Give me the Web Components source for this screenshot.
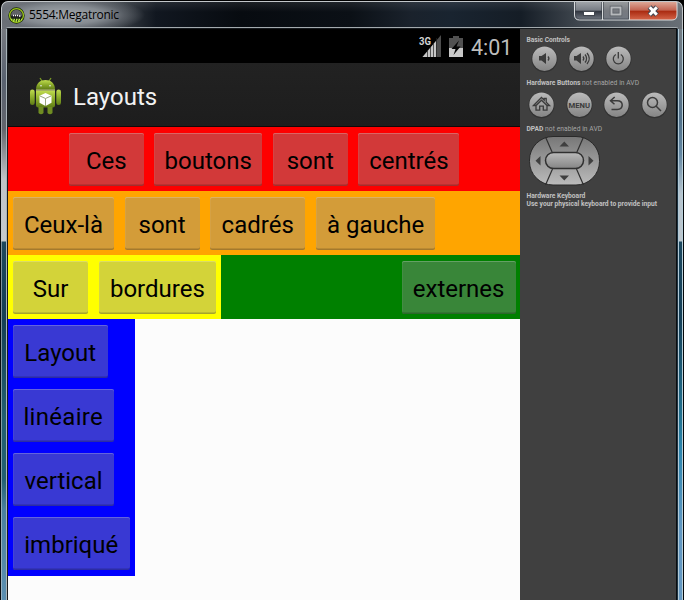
<!DOCTYPE html>
<html lang="fr">
<head>
<meta charset="utf-8">
<title>5554:Megatronic</title>
<style>
html,body{margin:0;width:684px;height:600px;overflow:hidden;background:#000}
</style>
</head>
<body>
<emulator-window>
  <title-bar slot="title">5554:Megatronic</title-bar>
  <phone-screen slot="screen">
    <status-bar></status-bar>
    <action-bar>Layouts</action-bar>
    <linear-row style="--bg:#fe0000;justify-content:center;padding-right:4.500px">
      <android-button style="width:74.500px">Ces</android-button>
      <android-button style="width:108px">boutons</android-button>
      <android-button style="width:75px">sont</android-button>
      <android-button style="width:101px">centrés</android-button>
    </linear-row>
    <linear-row style="--bg:#ffa500">
      <android-button style="width:101px">Ceux-là</android-button>
      <android-button style="width:75px">sont</android-button>
      <android-button style="width:95px">cadrés</android-button>
      <android-button style="width:119.500px">à gauche</android-button>
    </linear-row>
    <split-row>
      <linear-row slot="start" style="--bg:#ffff00">
        <android-button style="width:75px">Sur</android-button>
        <android-button style="width:117.500px">bordures</android-button>
      </linear-row>
      <android-button slot="end" style="width:114px">externes</android-button>
    </split-row>
    <linear-column>
      <android-button style="width:94.500px">Layout</android-button>
      <android-button style="width:100.500px;letter-spacing:.3px">linéaire</android-button>
      <android-button style="width:101px">vertical</android-button>
      <android-button style="width:116.500px">imbriqué</android-button>
    </linear-column>
  </phone-screen>
  <control-panel slot="controls"></control-panel>
</emulator-window>

<script>
const define = (name, html) => {
  const tpl = document.createElement('template');
  tpl.innerHTML = html;
  customElements.define(name, class extends HTMLElement {
    constructor() {
      super();
      this.attachShadow({mode: 'open'}).append(tpl.content.cloneNode(true));
    }
  });
};

define('emulator-window', `
<style>
:host{display:grid;width:684px;height:600px;box-sizing:border-box;
  grid-template:29px 571px / 8px 512px 156px 8px;overflow:hidden;
  font-family:Roboto,sans-serif;background:#000}
.title{grid-column:1/-1}
.left,.right{box-sizing:border-box}
.left{border-left:1px solid #090c0f;border-right:1px solid #15191c;
  background:linear-gradient(90deg,#0c1014 0 .5px,#c3c8cb99 .5px 1.500px,transparent 1.500px 5px,#a9b4b9 5px 6px),
  linear-gradient(#777a80 0,#596270 50px,#62656c 100px,#bfc3c7 150px,#c6cacd 212px,#1e475c 213px,#153f54 290px,#236071 390px,#236071 450px,#4a809d 480px,#5c8fb1 571px)}
.right{border-left:1px solid #0b0e10;border-right:1px solid #05080a;
  background:linear-gradient(90deg,#1d3342 0 1px,#b2cad7 1px 2px,transparent 2px 5px,#b9d0da 5px 6px),
  linear-gradient(#747d84 0,#52718a 90px,#6387a2 125px,#b6c4ce 165px,#bcc6cd 212px,#1c485f 213px,#164058 290px,#237391 390px,#2c85ad 420px,#6298c2 500px,#6598c1 571px)}
</style>
<div class="title"><slot name="title"></slot></div>
<div class="left"></div>
<slot name="screen"></slot>
<slot name="controls"></slot>
<div class="right"></div>`);

define('title-bar', `
<style>
:host{display:flex;height:29px;box-sizing:border-box;border:1px solid #000;border-bottom:0;
  border-radius:8px 8px 0 0;overflow:hidden;position:relative;
  background:radial-gradient(ellipse 82px 19px at 62px 14px,#a5a9ae 0,#858b91 50%,#686d74aa 75%,transparent 100%),
    linear-gradient(#ffffff18,transparent 40%),
    linear-gradient(90deg,#6d7178 0,#626970 70px,#30363d 125px,#111720 155px,#070b10 240px,#0b1016 350px,#1a222c 410px,#192430 450px,#151d26 520px,#414850 580px,#6a7178 684px)}
:host::before{content:"";position:absolute;inset:0;border:1px solid #c2c6c9;border-bottom:0;border-radius:7px 7px 0 0}
:host::after{content:"";position:absolute;left:5px;right:5px;bottom:0;height:2px;box-sizing:border-box;border:1px solid #a3aaae;border-bottom-color:#15191d;border-radius:2px 2px 0 0}
.logo{margin:6px 0 0 7px;width:17px;height:17px;flex:none}
.name{margin:6px 0 0 4px;font:12px/16px "Open Sans",sans-serif;letter-spacing:-.27px;color:#000;white-space:nowrap}
.buttons{margin:1px 5px 0 auto;height:19px;width:104px;flex:none}
</style>
<svg class="logo" viewBox="0 0 17 17"><circle cx="8.500" cy="8.500" r="7.400" fill="#1c2519" stroke="#172708" stroke-width="1.600"/><circle cx="8.500" cy="8.500" r="6.900" fill="none" stroke="#9cc51d" stroke-width="1.300"/><path d="M3 8a5.500 5.300 0 0 1 11 0v1H3z" fill="#606366"/><path d="M3.500 8.500h10v2h-10z" fill="#222"/><path d="M5 8.500h1M7 8.500h1M9 8.500h1M11 9h1.500" stroke="#fff" stroke-width="1.300"/><path d="M3 12.500h11M5 14h7" stroke="#baf044" stroke-width="1.500" stroke-dasharray="1.500 1"/></svg>
<span class="name"><slot></slot></span>
<svg class="buttons" viewBox="0 0 104 19">
 <defs>
  <linearGradient id="g" x2="0" y2="1"><stop stop-color="#a0a4a9"/><stop offset=".46" stop-color="#777c84"/><stop offset=".5" stop-color="#30353f"/><stop offset="1" stop-color="#737983"/></linearGradient>
  <linearGradient id="h" x2="0" y2="1"><stop stop-color="#979a9d"/><stop offset=".5" stop-color="#777a80"/><stop offset="1" stop-color="#737983"/></linearGradient>
  <linearGradient id="r" x2="0" y2="1"><stop stop-color="#dda797"/><stop offset=".46" stop-color="#c36350"/><stop offset=".5" stop-color="#a92910"/><stop offset="1" stop-color="#d5664a"/></linearGradient>
 </defs>
 <path d="M.5 0V13q0 5 5 5H28V0z" fill="url(#g)"/><path d="M28 0h28v18H28z" fill="url(#h)"/>
 <path d="M56 0h47v13q0 5-5 5H56z" fill="url(#r)"/>
 <path d="M.5 0V13q0 5 5 5H98q5 0 5-5V0M28.500 0v18M55.500 0v18" fill="none" stroke="#d8dbdd"/>
 <path d="M1.500 0v13q0 4 4 4H27.500V0M29.500 0v17h25V0" fill="none" stroke="#343a43" stroke-opacity=".55"/>
 <rect x="9.500" y="9.500" width="11" height="4" fill="#fff" stroke="#41464f"/>
 <path d="M37.500 5.500h9v7h-9z" fill="none" stroke="#565b62" stroke-width="3.400"/><path d="M37.500 5.500h9v7h-9z" fill="none" stroke="#b6b9bc" stroke-width="2"/>
 <path d="M75.500 5l7.500 8M83 5L75.500 13" stroke="#454852" stroke-width="5.200"/><path d="M75.700 5.200l7.100 7.600M82.800 5.200l-7.100 7.600" stroke="#fff" stroke-width="3"/>
</svg>`);

define('phone-screen', `
<style>:host{display:flex;flex-direction:column;align-items:stretch;width:512px;height:571px;background:#fcfcfc;overflow:hidden}</style>
<slot></slot>`);

define('status-bar', `
<style>
:host{display:flex;height:34px;flex:none;background:#000;justify-content:flex-end;align-items:center;
 color:#bdbdbd;padding-right:9px;box-sizing:border-box}
svg{flex:none;overflow:visible}
.net{font:700 11.500px Roboto,sans-serif}
.time{font:21.500px/34px Roboto,sans-serif;margin-left:8px;width:40px;padding-top:3px;white-space:nowrap}
</style>
<svg width="44" height="34"><path d="M22 6v22H3.500z" fill="#4d4d4d"/><path d="M17 12v16H3.500z" fill="#c6c6c6"/><path d="M8.500 21v7M11.500 18v10M14.500 15v13M17.500 9v19" stroke="#222" stroke-width=".7"/><path d="M0 7h13v10H0z" fill="#000"/><text class="net" x="0" y="16" fill="#d2d2d2" textLength="12" lengthAdjust="spacingAndGlyphs">3G</text>
<path d="M30 9h4V7h6v2h4v19H30z" fill="#515151"/><path d="M30 19h14v9H30z" fill="#c8c8c8"/><path d="M40 11.500l-7.500 8.500h4l-2 6 7-8.500h-4z" fill="#050505"/></svg>
<span class="time">4:01</span>`);

define('action-bar', `
<style>
:host{display:flex;height:64px;flex:none;background:linear-gradient(#222,#1d1d1d);border-bottom:1px solid #120808;box-sizing:border-box;align-items:center;color:#f2f2f2;font-size:24px}
svg{margin:2px 0 0 21px;flex:none}
span{margin:4px 0 0 11px;line-height:28px;white-space:nowrap}
</style>
<svg width="33" height="38" viewBox="0 0 33 38"><defs><linearGradient id="a" x2="0" y2="1"><stop stop-color="#c0dc50"/><stop offset=".5" stop-color="#8dad2b"/><stop offset="1" stop-color="#5f7c16"/></linearGradient></defs>
<path d="M11 1l2.500 4M22 1l-2.500 4" stroke="#799b25" stroke-width="1.300"/><path d="M7 12.500C7 6 11.500 3 16.500 3S26 6 26 12.500z" fill="url(#a)"/><path d="M7 13.500h19V28q0 2.500-2.500 2.500h-14Q7 30.500 7 28z" fill="url(#a)"/>
<rect x="1" y="12.500" width="4.700" height="15.500" rx="2.300" fill="url(#a)"/><rect x="27.300" y="12.500" width="4.700" height="15.500" rx="2.300" fill="url(#a)"/><path d="M9.500 30h5v6q-2.500 2.500-5 0zM18.500 30h5v6q-2.500 2.500-5 0z" fill="#708d22"/><path d="M7 13h19" stroke="#d8e687" stroke-width="1"/><circle cx="12" cy="8.800" r=".8" fill="#eef"/><circle cx="21" cy="8.800" r=".8" fill="#eef"/>
<path d="M16.500 16l6 2.700v7l-6 3.300-6-3.300v-7z" fill="#fff"/><path d="M11 19l5.500 2.500L22 19M16.500 21.500V29" stroke="#99a47b" fill="none"/></svg>
<span><slot></slot></span>`);

define('linear-row', `
<style>:host{display:flex;height:64px;flex:none;box-sizing:border-box;background:var(--bg);gap:10.600px;padding:6px 5px 0;align-items:flex-start}</style>
<slot></slot>`);

define('split-row', `
<style>:host{display:flex;height:64px;flex:none;background:#008000;justify-content:space-between}
::slotted(android-button){margin:6px 4.400px 0 0}</style>
<slot name="start"></slot><slot name="end"></slot>`);

define('linear-column', `
<style>:host{display:flex;flex-direction:column;align-items:flex-start;align-self:flex-start;width:127px;height:257px;flex:none;box-sizing:border-box;background:#00f;padding:6px 5px 0;gap:11px}</style>
<slot></slot>`);

define('android-button', `
<style>
:host{display:flex;height:53px;flex:none;box-sizing:border-box;justify-content:center;align-items:center;padding-top:2px;
 color:#000;font:24px/28px Roboto,sans-serif;white-space:nowrap;border-radius:2px;
 background:rgba(144,144,144,.396);
 box-shadow:inset 0 1px rgba(255,255,255,.22),inset 0 -1.500px rgba(0,0,0,.22),inset 1px 0 rgba(255,255,255,.06)}
</style><slot></slot>`);

define('control-panel', `
<style>
:host{display:flex;flex-direction:column;align-items:flex-start;box-sizing:border-box;width:156px;height:571px;background:#404040;padding:7px 0 0 6.500px;color:#a6a6a6;font:6.700px/8px Roboto,sans-serif;white-space:nowrap}
b{color:#c0c0c0;font-weight:700;letter-spacing:-.01px}
.line{height:8px;flex:none;letter-spacing:.04px}
.set{display:flex;gap:10.300px;margin:1px 0 7px 4px;height:27px;flex:none}
.hard{margin:4px 0 7px 1.500px;gap:10.500px}
svg{display:block;overflow:visible}
.pad{margin:0 0 5px 1px;flex:none}
</style>
<div class="line"><b>Basic Controls</b></div>
<div class="set"><round-button icon="low"></round-button><round-button icon="high"></round-button><round-button icon="power"></round-button></div>
<div class="line"><b>Hardware Buttons</b> not enabled in AVD</div>
<div class="set hard"><round-button icon="home"></round-button><round-button icon="menu"></round-button><round-button icon="back"></round-button><round-button icon="search"></round-button></div>
<div class="line"><b>DPAD</b> not enabled in AVD</div>
<svg class="pad" width="73" height="54" viewBox="0 -1 73 54"><defs><linearGradient id="p" x2="0" y2="1"><stop stop-color="#777"/><stop offset="1" stop-color="#bbb"/></linearGradient><linearGradient id="c" x2="0" y2="1"><stop stop-color="#bbb"/><stop offset="1" stop-color="#858585"/></linearGradient></defs>
<rect x="1.500" y="2.500" width="70" height="48.500" rx="23.500" fill="url(#p)" stroke="#292929"/>
<path d="M17.500 3l7 16M55.500 3l-7 16M17.500 51l7-16M55.500 51l-7-16" stroke="#303030" stroke-width="1.200"/>
<rect x="17.500" y="18.500" width="38" height="16" rx="8" fill="url(#c)" stroke="#303030" stroke-width="1.500"/>
<path d="M31.500 12.500h9.500l-4.700-5zM31.500 41.500h9.500l-4.700 5zM12.500 22v9.500l-5-4.700zM60.500 22v9.500l5-4.700z" fill="#3f3f3f"/></svg>
<div class="line"><b>Hardware Keyboard</b></div>
<div class="line"><b>Use your physical keyboard to provide input</b></div>`);

const icons = {
  low: '<path d="M8 11h2.500L15 8v11l-4.500-3.500H8z" fill="#3b3b3b"/><path d="M17 11.500q1.800 2 0 4" class="s"/>',
  high: '<path d="M6 11h2.500L13 8v11l-4.500-3.500H6z" fill="#3b3b3b"/><path d="M15 11.500q1.600 2 0 4M17 9.500q3.200 4 0 8M19 8q4.600 5.500 0 11" class="s"/>',
  power: '<path d="M10.800 9.500a5 5 0 1 0 5 0M13.300 7v6.500" class="s"/>',
  home: '<path d="M8 14.800v4.400h3.700v-4h3.600v4H19v-4.400M5.500 14.500l8-8 2.700 2.600V7.500h2v3.700l3.300 3.300H19l-5.500-5.300-5.500 5.300z" class="s"/>',
  menu: '<text x="2.500" y="16.700" textLength="21.500" lengthAdjust="spacingAndGlyphs" font-size="8" font-weight="700" fill="#3b3b3b">MENU</text>',
  back: '<path d="M11.700 6L7.500 9.700l4 3.600M8 9.700h6.200q5 0 5 4.400t-5 4.400H8.500" class="s b"/>',
  search: '<circle cx="11.500" cy="11.500" r="5" class="s b"/><path d="M15 15l5 5" class="s b"/>'
};
customElements.define('round-button', class extends HTMLElement {
  constructor() {
    super();
    this.attachShadow({mode: 'open'});
  }
  connectedCallback() {
    this.shadowRoot.innerHTML = `
<style>:host{display:block;width:27px;height:27px;flex:none}svg{display:block}.s{fill:none;stroke:#3b3b3b;stroke-width:1.300}.b{stroke-width:1.500}text{font-family:Roboto,sans-serif}</style>
<svg width="27" height="28" viewBox="0 0 27 28"><defs><linearGradient id="g" x2="0" y2="1"><stop stop-color="#bbb"/><stop offset="1" stop-color="#858585"/></linearGradient></defs>
<circle cx="13.500" cy="14.300" r="13" fill="#323232"/><circle cx="13.500" cy="13.700" r="12.200" fill="url(#g)"/>${icons[this.getAttribute('icon')]}</svg>`;
  }
});
</script>
</body>
</html>
